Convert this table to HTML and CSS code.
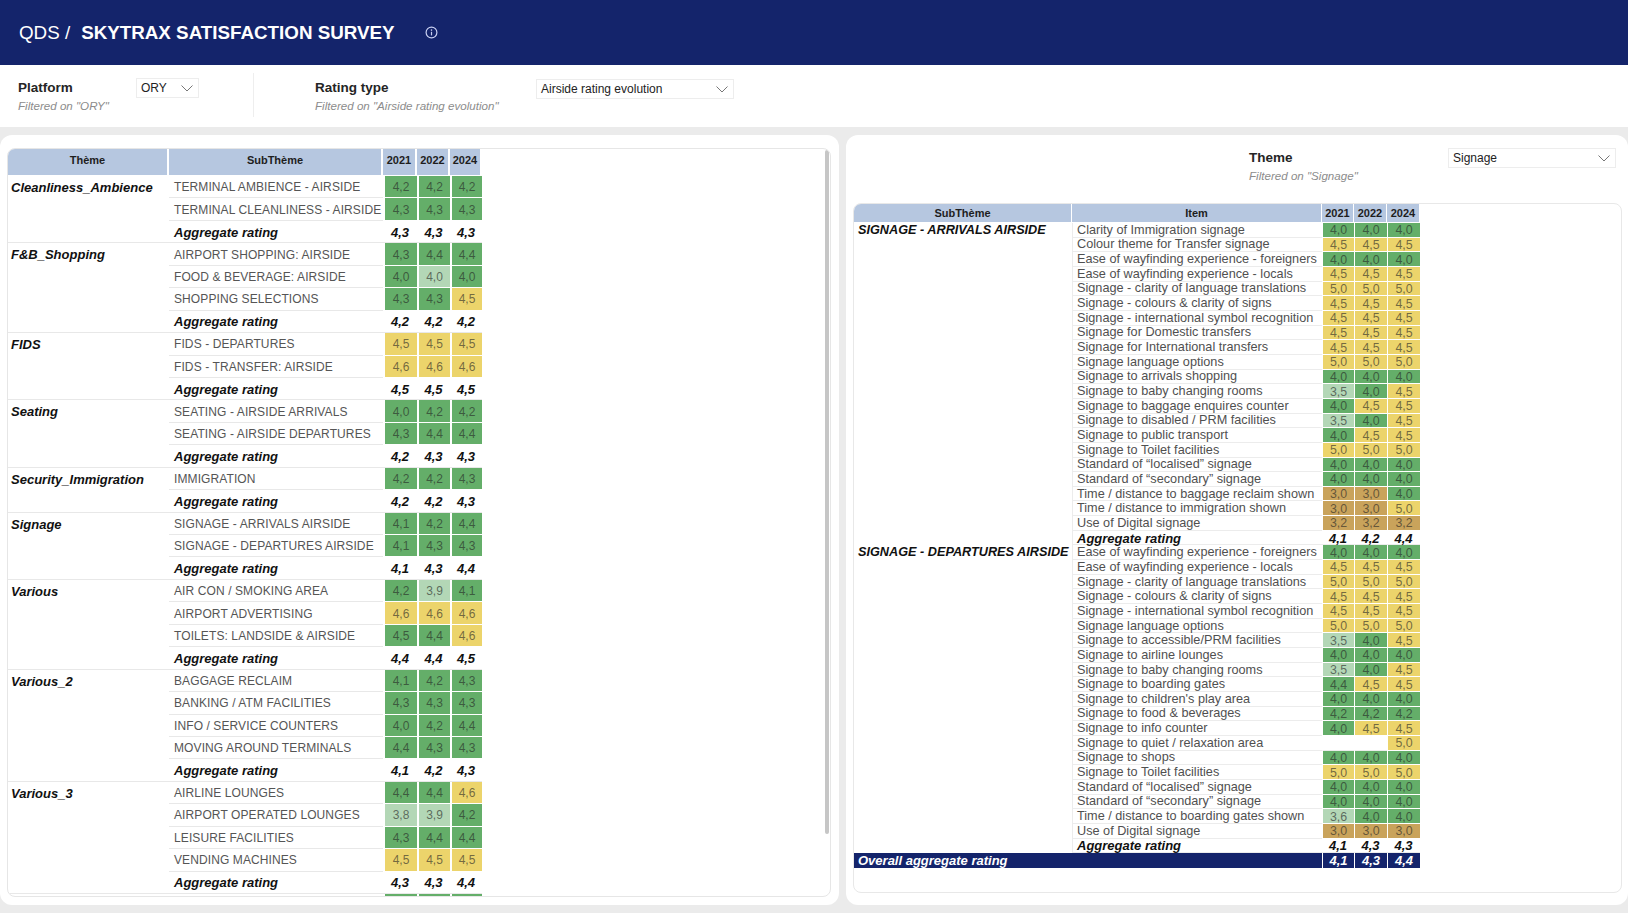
FILE: index.html
```html
<!DOCTYPE html>
<html lang="en">
<head>
<meta charset="utf-8">
<title>QDS / SKYTRAX SATISFACTION SURVEY</title>
<link rel="stylesheet" href="styles.css">
</head>
<body>
<header class="topbar">
  <span class="crumb">QDS /</span>
  <span class="title">SKYTRAX SATISFACTION SURVEY</span>
  <span class="info"><svg width="13" height="13" viewBox="0 0 13 13"><circle cx="6.5" cy="6.5" r="5.4" fill="none" stroke="#c9d0f2" stroke-width="1.2"/><circle cx="6.5" cy="4.1" r="0.8" fill="#c9d0f2"/><path d="M6.5 5.8 V9.4" stroke="#c9d0f2" stroke-width="1.2"/></svg></span>
</header>

<section class="filters">
  <div class="fgroup platform">
    <div class="flabel">
      <div class="name">Platform</div>
      <div class="hint">Filtered on "ORY"</div>
    </div>
    <div class="dropdown"><span>ORY</span><svg width="12" height="7" viewBox="0 0 12 7"><path d="M0.5 0.5 L6 6 L11.5 0.5" fill="none" stroke="#777" stroke-width="1"/></svg></div>
  </div>
  <div class="divider"></div>
  <div class="fgroup rating">
    <div class="flabel">
      <div class="name">Rating type</div>
      <div class="hint">Filtered on "Airside rating evolution"</div>
    </div>
    <div class="dropdown"><span>Airside rating evolution</span><svg width="12" height="7" viewBox="0 0 12 7"><path d="M0.5 0.5 L6 6 L11.5 0.5" fill="none" stroke="#777" stroke-width="1"/></svg></div>
  </div>
</section>

<main class="main">
  <section class="card left">
    <div class="lbox">
      <div class="lt">
        <div class="hd">Thème</div><div class="hd">SubThème</div><div class="hd">2021</div><div class="hd">2022</div><div class="hd">2024</div>

        <div class="th s3">Cleanliness_Ambience</div>
        <div class="sub">TERMINAL AMBIENCE - AIRSIDE</div><div class="v g">4,2</div><div class="v g">4,2</div><div class="v g">4,2</div>
        <div class="sub">TERMINAL CLEANLINESS - AIRSIDE</div><div class="v g">4,3</div><div class="v g">4,3</div><div class="v g">4,3</div>
        <div class="sub agg">Aggregate rating</div><div class="va">4,3</div><div class="va">4,3</div><div class="va">4,3</div>

        <div class="th s4">F&amp;B_Shopping</div>
        <div class="sub">AIRPORT SHOPPING: AIRSIDE</div><div class="v g">4,3</div><div class="v g">4,4</div><div class="v g">4,4</div>
        <div class="sub">FOOD &amp; BEVERAGE: AIRSIDE</div><div class="v g">4,0</div><div class="v lg">4,0</div><div class="v g">4,0</div>
        <div class="sub">SHOPPING SELECTIONS</div><div class="v g">4,3</div><div class="v g">4,3</div><div class="v y">4,5</div>
        <div class="sub agg">Aggregate rating</div><div class="va">4,2</div><div class="va">4,2</div><div class="va">4,2</div>

        <div class="th s3">FIDS</div>
        <div class="sub">FIDS - DEPARTURES</div><div class="v y">4,5</div><div class="v y">4,5</div><div class="v y">4,5</div>
        <div class="sub">FIDS - TRANSFER: AIRSIDE</div><div class="v y">4,6</div><div class="v y">4,6</div><div class="v y">4,6</div>
        <div class="sub agg">Aggregate rating</div><div class="va">4,5</div><div class="va">4,5</div><div class="va">4,5</div>

        <div class="th s3">Seating</div>
        <div class="sub">SEATING - AIRSIDE ARRIVALS</div><div class="v g">4,0</div><div class="v g">4,2</div><div class="v g">4,2</div>
        <div class="sub">SEATING - AIRSIDE DEPARTURES</div><div class="v g">4,3</div><div class="v g">4,4</div><div class="v g">4,4</div>
        <div class="sub agg">Aggregate rating</div><div class="va">4,2</div><div class="va">4,3</div><div class="va">4,3</div>

        <div class="th s2">Security_Immigration</div>
        <div class="sub">IMMIGRATION</div><div class="v g">4,2</div><div class="v g">4,2</div><div class="v g">4,3</div>
        <div class="sub agg">Aggregate rating</div><div class="va">4,2</div><div class="va">4,2</div><div class="va">4,3</div>

        <div class="th s3">Signage</div>
        <div class="sub">SIGNAGE - ARRIVALS AIRSIDE</div><div class="v g">4,1</div><div class="v g">4,2</div><div class="v g">4,4</div>
        <div class="sub">SIGNAGE - DEPARTURES AIRSIDE</div><div class="v g">4,1</div><div class="v g">4,3</div><div class="v g">4,3</div>
        <div class="sub agg">Aggregate rating</div><div class="va">4,1</div><div class="va">4,3</div><div class="va">4,4</div>

        <div class="th s4">Various</div>
        <div class="sub">AIR CON / SMOKING AREA</div><div class="v g">4,2</div><div class="v lg">3,9</div><div class="v g">4,1</div>
        <div class="sub">AIRPORT ADVERTISING</div><div class="v y">4,6</div><div class="v y">4,6</div><div class="v y">4,6</div>
        <div class="sub">TOILETS: LANDSIDE &amp; AIRSIDE</div><div class="v g">4,5</div><div class="v g">4,4</div><div class="v y">4,6</div>
        <div class="sub agg">Aggregate rating</div><div class="va">4,4</div><div class="va">4,4</div><div class="va">4,5</div>

        <div class="th s5">Various_2</div>
        <div class="sub">BAGGAGE RECLAIM</div><div class="v g">4,1</div><div class="v g">4,2</div><div class="v g">4,3</div>
        <div class="sub">BANKING / ATM FACILITIES</div><div class="v g">4,3</div><div class="v g">4,3</div><div class="v g">4,3</div>
        <div class="sub">INFO / SERVICE COUNTERS</div><div class="v g">4,0</div><div class="v g">4,2</div><div class="v g">4,4</div>
        <div class="sub">MOVING AROUND TERMINALS</div><div class="v g">4,4</div><div class="v g">4,3</div><div class="v g">4,3</div>
        <div class="sub agg">Aggregate rating</div><div class="va">4,1</div><div class="va">4,2</div><div class="va">4,3</div>

        <div class="th s5">Various_3</div>
        <div class="sub">AIRLINE LOUNGES</div><div class="v g">4,4</div><div class="v g">4,4</div><div class="v y">4,6</div>
        <div class="sub">AIRPORT OPERATED LOUNGES</div><div class="v lg">3,8</div><div class="v lg">3,9</div><div class="v g">4,2</div>
        <div class="sub">LEISURE FACILITIES</div><div class="v g">4,3</div><div class="v g">4,4</div><div class="v g">4,4</div>
        <div class="sub">VENDING MACHINES</div><div class="v y">4,5</div><div class="v y">4,5</div><div class="v y">4,5</div>
        <div class="sub agg">Aggregate rating</div><div class="va">4,3</div><div class="va">4,3</div><div class="va">4,4</div>

        <div class="th s2"></div>
        <div class="sub"></div><div class="v g"></div><div class="v g"></div><div class="v g"></div>
      </div>
      <div class="scrollbar"></div>
    </div>
  </section>

  <section class="card right">
    <div class="theme-bar">
      <div class="flabel">
        <div class="name">Theme</div>
        <div class="hint">Filtered on "Signage"</div>
      </div>
      <div class="dropdown"><span>Signage</span><svg width="12" height="7" viewBox="0 0 12 7"><path d="M0.5 0.5 L6 6 L11.5 0.5" fill="none" stroke="#777" stroke-width="1"/></svg></div>
    </div>
    <div class="rbox">
      <div class="rt">
        <div class="rhd">SubThème</div><div class="rhd">Item</div><div class="rhd">2021</div><div class="rhd">2022</div><div class="rhd">2024</div>

        <div class="rsub s22">SIGNAGE - ARRIVALS AIRSIDE</div>
        <div class="item">Clarity of Immigration signage</div><div class="rv g">4,0</div><div class="rv g">4,0</div><div class="rv g">4,0</div>
        <div class="item">Colour theme for Transfer signage</div><div class="rv y">4,5</div><div class="rv y">4,5</div><div class="rv y">4,5</div>
        <div class="item">Ease of wayfinding experience - foreigners</div><div class="rv g">4,0</div><div class="rv g">4,0</div><div class="rv g">4,0</div>
        <div class="item">Ease of wayfinding experience - locals</div><div class="rv y">4,5</div><div class="rv y">4,5</div><div class="rv y">4,5</div>
        <div class="item">Signage - clarity of language translations</div><div class="rv y">5,0</div><div class="rv y">5,0</div><div class="rv y">5,0</div>
        <div class="item">Signage - colours &amp; clarity of signs</div><div class="rv y">4,5</div><div class="rv y">4,5</div><div class="rv y">4,5</div>
        <div class="item">Signage - international symbol recognition</div><div class="rv y">4,5</div><div class="rv y">4,5</div><div class="rv y">4,5</div>
        <div class="item">Signage for Domestic transfers</div><div class="rv y">4,5</div><div class="rv y">4,5</div><div class="rv y">4,5</div>
        <div class="item">Signage for International transfers</div><div class="rv y">4,5</div><div class="rv y">4,5</div><div class="rv y">4,5</div>
        <div class="item">Signage language options</div><div class="rv y">5,0</div><div class="rv y">5,0</div><div class="rv y">5,0</div>
        <div class="item">Signage to arrivals shopping</div><div class="rv g">4,0</div><div class="rv g">4,0</div><div class="rv g">4,0</div>
        <div class="item">Signage to baby changing rooms</div><div class="rv lg">3,5</div><div class="rv g">4,0</div><div class="rv y">4,5</div>
        <div class="item">Signage to baggage enquires counter</div><div class="rv g">4,0</div><div class="rv y">4,5</div><div class="rv y">4,5</div>
        <div class="item">Signage to disabled / PRM facilities</div><div class="rv lg">3,5</div><div class="rv g">4,0</div><div class="rv y">4,5</div>
        <div class="item">Signage to public transport</div><div class="rv g">4,0</div><div class="rv y">4,5</div><div class="rv y">4,5</div>
        <div class="item">Signage to Toilet facilities</div><div class="rv y">5,0</div><div class="rv y">5,0</div><div class="rv y">5,0</div>
        <div class="item">Standard of “localised” signage</div><div class="rv g">4,0</div><div class="rv g">4,0</div><div class="rv g">4,0</div>
        <div class="item">Standard of “secondary” signage</div><div class="rv g">4,0</div><div class="rv g">4,0</div><div class="rv g">4,0</div>
        <div class="item">Time / distance to baggage reclaim shown</div><div class="rv b">3,0</div><div class="rv b">3,0</div><div class="rv g">4,0</div>
        <div class="item">Time / distance to immigration shown</div><div class="rv b">3,0</div><div class="rv b">3,0</div><div class="rv y">5,0</div>
        <div class="item">Use of Digital signage</div><div class="rv b">3,2</div><div class="rv b">3,2</div><div class="rv b">3,2</div>
        <div class="item agg">Aggregate rating</div><div class="rva">4,1</div><div class="rva">4,2</div><div class="rva">4,4</div>

        <div class="rsub s21">SIGNAGE - DEPARTURES AIRSIDE</div>
        <div class="item">Ease of wayfinding experience - foreigners</div><div class="rv g">4,0</div><div class="rv g">4,0</div><div class="rv g">4,0</div>
        <div class="item">Ease of wayfinding experience - locals</div><div class="rv y">4,5</div><div class="rv y">4,5</div><div class="rv y">4,5</div>
        <div class="item">Signage - clarity of language translations</div><div class="rv y">5,0</div><div class="rv y">5,0</div><div class="rv y">5,0</div>
        <div class="item">Signage - colours &amp; clarity of signs</div><div class="rv y">4,5</div><div class="rv y">4,5</div><div class="rv y">4,5</div>
        <div class="item">Signage - international symbol recognition</div><div class="rv y">4,5</div><div class="rv y">4,5</div><div class="rv y">4,5</div>
        <div class="item">Signage language options</div><div class="rv y">5,0</div><div class="rv y">5,0</div><div class="rv y">5,0</div>
        <div class="item">Signage to accessible/PRM facilities</div><div class="rv lg">3,5</div><div class="rv g">4,0</div><div class="rv y">4,5</div>
        <div class="item">Signage to airline lounges</div><div class="rv g">4,0</div><div class="rv g">4,0</div><div class="rv g">4,0</div>
        <div class="item">Signage to baby changing rooms</div><div class="rv lg">3,5</div><div class="rv g">4,0</div><div class="rv y">4,5</div>
        <div class="item">Signage to boarding gates</div><div class="rv g">4,4</div><div class="rv y">4,5</div><div class="rv y">4,5</div>
        <div class="item">Signage to children's play area</div><div class="rv g">4,0</div><div class="rv g">4,0</div><div class="rv g">4,0</div>
        <div class="item">Signage to food &amp; beverages</div><div class="rv g">4,2</div><div class="rv g">4,2</div><div class="rv g">4,2</div>
        <div class="item">Signage to info counter</div><div class="rv g">4,0</div><div class="rv y">4,5</div><div class="rv y">4,5</div>
        <div class="item">Signage to quiet / relaxation area</div><div class="rv blank"></div><div class="rv blank"></div><div class="rv y">5,0</div>
        <div class="item">Signage to shops</div><div class="rv g">4,0</div><div class="rv g">4,0</div><div class="rv g">4,0</div>
        <div class="item">Signage to Toilet facilities</div><div class="rv y">5,0</div><div class="rv y">5,0</div><div class="rv y">5,0</div>
        <div class="item">Standard of “localised” signage</div><div class="rv g">4,0</div><div class="rv g">4,0</div><div class="rv g">4,0</div>
        <div class="item">Standard of “secondary” signage</div><div class="rv g">4,0</div><div class="rv g">4,0</div><div class="rv g">4,0</div>
        <div class="item">Time / distance to boarding gates shown</div><div class="rv lg">3,6</div><div class="rv g">4,0</div><div class="rv g">4,0</div>
        <div class="item">Use of Digital signage</div><div class="rv b">3,0</div><div class="rv b">3,0</div><div class="rv b">3,0</div>
        <div class="item agg">Aggregate rating</div><div class="rva">4,1</div><div class="rva">4,3</div><div class="rva">4,3</div>

        <div class="overall">Overall aggregate rating</div><div class="ov">4,1</div><div class="ov">4,3</div><div class="ov">4,4</div>
      </div>
    </div>
  </section>
</main>
</body>
</html>
```

FILE: styles.css
```css
* { box-sizing: border-box; }
html, body { margin: 0; padding: 0; }
body {
  width: 1628px;
  height: 913px;
  overflow: hidden;
  background: #ebebeb;
  font-family: "Liberation Sans", Arial, sans-serif;
  color: #222;
}

/* top bar */
.topbar {
  height: 65px;
  background: #14246b;
  color: #fff;
  display: flex;
  align-items: center;
  padding-left: 19px;
  font-size: 18.8px;
}
.topbar .crumb { font-weight: 400; }
.topbar .title { font-weight: 700; margin-left: 11px; }
.topbar .info { display: flex; margin-left: 30px; }

/* filters */
.filters {
  height: 62px;
  background: #fff;
  display: flex;
  align-items: stretch;
}
.fgroup { display: flex; align-items: flex-start; }
.fgroup.platform { padding-left: 18px; }
.flabel { padding-top: 15px; }
.flabel .name { font-size: 13.5px; font-weight: 700; line-height: 16px; color: #252525; }
.flabel .hint { font-size: 11.6px; font-style: italic; line-height: 14px; color: #8c8c8c; margin-top: 3px; white-space: nowrap; }
.platform .flabel { width: 118px; }
.dropdown {
  margin-top: 13px;
  height: 20px;
  border: 1px solid #ededed;
  display: flex;
  align-items: center;
  justify-content: space-between;
  padding: 0 5px 0 4px;
  font-size: 12px;
  color: #222;
  background: #fff;
}
.platform .dropdown { width: 63px; }
.divider { width: 1px; background: #eeeeee; margin: 8px 0 10px 54px; }
.fgroup.rating { margin-left: 61px; }
.rating .flabel { width: 221px; }
.rating .dropdown { width: 198px; margin-top: 14px; }

/* main area */
.main {
  display: flex;
  gap: 7px;
  padding-top: 8px;
}
.card {
  background: #fff;
  border-radius: 12px;
  height: 770px;
}
.card.left { width: 839px; padding: 13px 8px 8px 7px; }
.card.right { flex: 1; padding: 13px 6px 12px 7px; display: flex; flex-direction: column; }

/* left table */
.lbox {
  position: relative;
  height: 100%;
  border: 1px solid #e6e6e6;
  border-radius: 8px;
  overflow: hidden;
}
.lt {
  display: grid;
  grid-template-columns: 161px 214px 34px 33px 32px;
  grid-template-rows: 27px;
  grid-auto-rows: 22.45px;
  width: 474px;
}
.hd {
  background: #b6c7e0;
  font-size: 11px;
  font-weight: 700;
  color: #1e1e1e;
  display: flex;
  align-items: center;
  justify-content: center;
  padding-bottom: 4px;
  border-right: 2px solid #fff;
  border-bottom: 1px solid #fff;
}
.s2 { grid-row: span 2; }
.s3 { grid-row: span 3; }
.s4 { grid-row: span 4; }
.s5 { grid-row: span 5; }
.s21 { grid-row: span 21; }
.s22 { grid-row: span 22; }
.th {
  font-size: 13px;
  font-weight: 700;
  font-style: italic;
  color: #111;
  line-height: 14px;
  padding: 5px 3px;
  border-bottom: 1px solid #e8e8e8;
}
.sub {
  font-size: 12px;
  color: #555;
  padding-left: 5px;
  padding-top: 1px;
  display: flex;
  align-items: center;
  white-space: nowrap;
  letter-spacing: 0.1px;
  border-bottom: 1px solid #e8e8e8;
}
.sub.agg, .item.agg {
  font-size: 13px;
  font-weight: 700;
  font-style: italic;
  color: #111;
  letter-spacing: 0;
}
.v, .va, .rv, .rva, .ov {
  display: flex;
  align-items: center;
  justify-content: center;
}
.v {
  font-size: 12px;
  padding-top: 1px;
  color: rgba(35, 35, 35, 0.62);
  border-left: 2px solid #fff;
  border-bottom: 1px solid #fff;
}
.va {
  font-size: 13px;
  font-weight: 700;
  font-style: italic;
  padding-top: 1px;
  color: #111;
  border-bottom: 1px solid #e8e8e8;
}
.g { background: #64ae69; }
.lg { background: #b3d7b6; }
.y { background: #ecd46b; }
.b { background: #c9a35b; }
.scrollbar {
  position: absolute;
  top: 1px;
  right: 1px;
  width: 4px;
  height: 684px;
  border-radius: 2px;
  background: #c6c6c6;
}

/* right panel */
.theme-bar {
  height: 55px;
  display: flex;
  justify-content: flex-end;
  padding-right: 6px;
  flex: none;
}
.theme-bar .flabel { padding-top: 2px; width: 199px; }
.theme-bar .dropdown { margin-top: 0; width: 168px; }
.rbox {
  flex: 1;
  border: 1px solid #e8e8e8;
  border-radius: 8px;
  overflow: hidden;
}
.rt {
  display: grid;
  grid-template-columns: 218px 250px 32px 33px 33px;
  grid-template-rows: 19px;
  grid-auto-rows: 14.66px;
  width: 566px;
}
.rhd {
  background: #b6c7e0;
  font-size: 11px;
  font-weight: 700;
  color: #1e1e1e;
  display: flex;
  align-items: center;
  justify-content: center;
  padding-bottom: 1px;
  border-right: 1px solid #fff;
  border-bottom: 1px solid #fff;
}
.rsub {
  font-size: 12.7px;
  font-weight: 700;
  font-style: italic;
  color: #111;
  line-height: 15.5px;
  padding: 0 4px;
  white-space: nowrap;
}
.item {
  font-size: 12.7px;
  color: #505050;
  padding-left: 4px;
  padding-top: 1px;
  display: flex;
  align-items: center;
  white-space: nowrap;
  border-bottom: 1px solid #ececec;
  border-left: 1px solid #ececec;
  line-height: 13px;
}
.rv {
  font-size: 12.4px;
  padding-top: 1px;
  color: rgba(35, 35, 35, 0.62);
  border-left: 1px solid #fff;
  border-bottom: 1px solid #fff;
}
.rv.blank { border-bottom: 1px solid #ececec; }
.rva {
  font-size: 13px;
  font-weight: 700;
  font-style: italic;
  padding-top: 1px;
  color: #111;
  border-bottom: 1px solid #ececec;
}
.overall {
  grid-column: span 2;
  background: #14246b;
  color: #fff;
  font-size: 13px;
  font-weight: 700;
  font-style: italic;
  padding-left: 4px;
  display: flex;
  align-items: center;
}
.ov {
  background: #14246b;
  color: #fff;
  font-size: 13px;
  font-weight: 700;
  font-style: italic;
  border-left: 1px solid #fff;
}
```
